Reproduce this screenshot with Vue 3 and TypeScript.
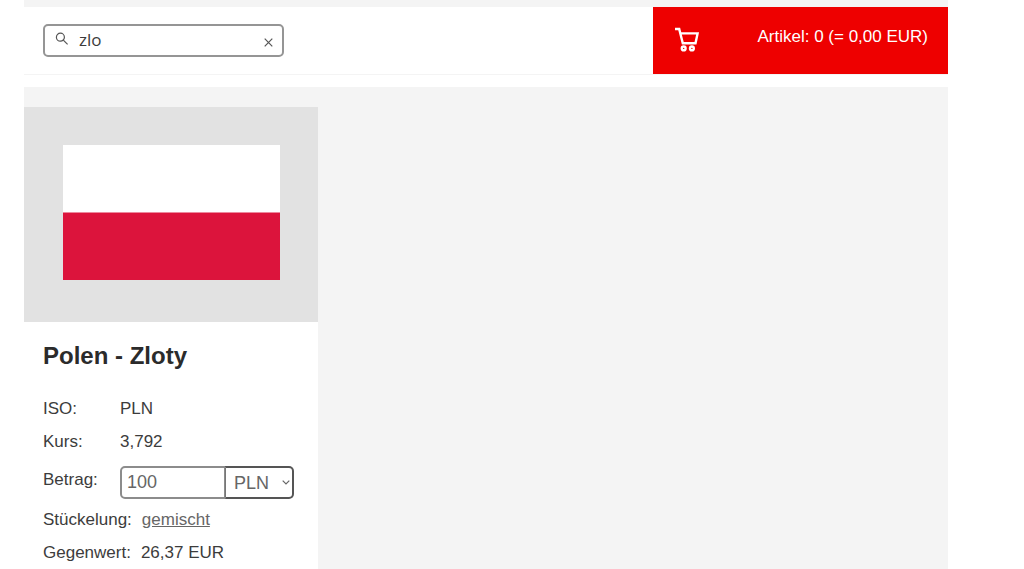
<script setup lang="ts">
import { computed, ref } from 'vue'

const query = ref('zlo')
const amount = ref('100')
const unit = ref('PLN')
const rate = 3.792

const countervalue = computed(() => {
  const value = Number(amount.value.replace(',', '.')) || 0
  const euros = unit.value === 'PLN' ? value / rate : value
  return euros.toFixed(2).replace('.', ',')
})
</script>

<template>
  <div class="page">
    <header class="header">
      <form class="search" role="search" @submit.prevent>
        <label class="search-label" for="search" aria-label="Suche">
          <svg width="14" height="14" viewBox="0 0 14 14" aria-hidden="true">
            <circle cx="5.4" cy="5.2" r="4" />
            <path d="M8.3 8.1L12.6 12.4" />
          </svg>
        </label>
        <input id="search" v-model="query" class="search-input" type="text" autocomplete="off" />
        <button class="clear" type="button" aria-label="Suche leeren" @click="query = ''">
          <svg width="9" height="9" viewBox="0 0 9 9" aria-hidden="true">
            <path d="M0.7 0.7L8.3 8.3M8.3 0.7L0.7 8.3" />
          </svg>
        </button>
      </form>
      <a class="cart" href="#warenkorb">
        <svg class="cart-icon" width="25" height="25" viewBox="0 0 25 25" aria-hidden="true">
          <path d="M1 2H5.2L8.8 16.2H21.5L23.6 6.4H6.4" />
          <circle cx="9.7" cy="21.4" r="1.9" />
          <circle cx="17.9" cy="21.4" r="1.9" />
        </svg>
        <span class="cart-text">Artikel: 0 (= 0,00 EUR)</span>
      </a>
    </header>

    <main class="results">
      <article class="card">
        <div class="flag-area">
          <svg class="flag" viewBox="0 0 16 10" preserveAspectRatio="none" role="img" aria-label="Flagge Polen">
            <rect width="16" height="10" fill="#ffffff" />
            <rect y="5" width="16" height="5" fill="#dc143c" />
          </svg>
        </div>
        <h2 class="title">Polen - Zloty</h2>
        <div class="row">
          <span class="key">ISO:</span>
          <span>PLN</span>
        </div>
        <div class="row">
          <span class="key">Kurs:</span>
          <span>3,792</span>
        </div>
        <div class="row amount-row">
          <label class="key" for="amount">Betrag:</label>
          <div class="amount">
            <input id="amount" v-model="amount" class="amount-input" type="text" inputmode="decimal" />
            <div class="unit">
              <select v-model="unit" class="unit-select" aria-label="Währung">
                <option>PLN</option>
                <option>EUR</option>
              </select>
              <svg class="chevron" width="8" height="5" viewBox="0 0 8 5" aria-hidden="true">
                <path d="M0.7 0.7L4 4L7.3 0.7" />
              </svg>
            </div>
          </div>
        </div>
        <div class="row inline-row">
          <span>Stückelung:</span>
          <a class="mix" href="#stueckelung">gemischt</a>
        </div>
        <div class="row inline-row">
          <span>Gegenwert:</span>
          <span>{{ countervalue }} EUR</span>
        </div>
      </article>
    </main>
  </div>
</template>

<style>
body {
  margin: 0;
  background: #ffffff;
}
</style>

<style scoped>
.page,
.page * {
  box-sizing: border-box;
}

.page {
  display: flex;
  flex-direction: column;
  min-height: 100vh;
  margin: 0 76px 0 24px;
  border-top: 7px solid #f4f4f4;
  font-family: "Liberation Sans", Arial, sans-serif;
  font-size: 17px;
  line-height: 20px;
  color: #3c3c3c;
}

.header {
  display: flex;
  justify-content: space-between;
  height: 68px;
  margin-bottom: 12px;
  border-bottom: 1px solid #f4f4f4;
}

.search {
  display: flex;
  align-items: center;
  width: 241px;
  height: 33px;
  margin: 17px 0 0 19px;
  padding: 0 9px 0 10px;
  border: 2px solid #959595;
  border-radius: 5px;
}

.search-label {
  display: flex;
  margin-bottom: 3px;
}

.search svg {
  fill: none;
  stroke: #555555;
  stroke-width: 1.2;
}

.search-input {
  flex: 1;
  min-width: 0;
  height: 28px;
  margin-left: 10px;
  padding: 0 0 2px;
  border: 0;
  outline: 0;
  background: transparent;
  font: 17px "Open Sans", "Noto Sans", sans-serif;
  color: #3c3c3c;
}

.clear {
  display: flex;
  margin-top: 3px;
  padding: 0;
  border: 0;
  background: transparent;
}

.cart {
  display: flex;
  justify-content: space-between;
  align-items: flex-start;
  width: 295px;
  padding: 20px 20px 0 21px;
  background: #ee0000;
  color: #ffffff;
  text-decoration: none;
}

.cart-icon {
  fill: none;
  stroke: #ffffff;
  stroke-width: 2.4;
}

.results {
  display: flex;
  flex: 1;
  padding-top: 20px;
  background: #f4f4f4;
}

.card {
  width: 294px;
  background: #ffffff;
}

.flag-area {
  display: flex;
  height: 215px;
  padding: 38px 38px 42px 39px;
  background: #e2e2e2;
}

.flag {
  width: 100%;
  height: 100%;
}

.title {
  margin: 0;
  padding: 19px 19px 21px;
  font-size: 24px;
  line-height: 30px;
  color: #2b2b2b;
}

.row {
  display: flex;
  align-items: center;
  height: 33px;
  padding: 0 19px;
}

.key {
  width: 77px;
}

.amount-row {
  align-items: flex-start;
  height: 45px;
  padding-top: 8px;
  line-height: 28px;
}

.amount {
  display: flex;
  width: 174px;
  height: 33px;
}

.amount-input {
  flex: 1;
  min-width: 0;
  padding: 0 5px 2px;
  border: 2px solid #8c8c8c;
  border-right-width: 1px;
  border-radius: 5px 0 0 5px;
  background: #ffffff;
  font: inherit;
  font-size: 18px;
  color: #666666;
}

.unit {
  position: relative;
  width: 69px;
}

.unit-select {
  width: 100%;
  height: 100%;
  padding: 0 8px;
  appearance: none;
  border: 2px solid #555555;
  border-left: 1px solid #777777;
  border-radius: 0 5px 5px 0;
  background: #ffffff;
  font: inherit;
  font-size: 18px;
  color: #666666;
}

.chevron {
  position: absolute;
  top: 14px;
  right: 4px;
  fill: none;
  stroke: #666666;
  stroke-width: 1.2;
  pointer-events: none;
}

.inline-row {
  gap: 10px;
}

.mix {
  color: #666666;
}
</style>
